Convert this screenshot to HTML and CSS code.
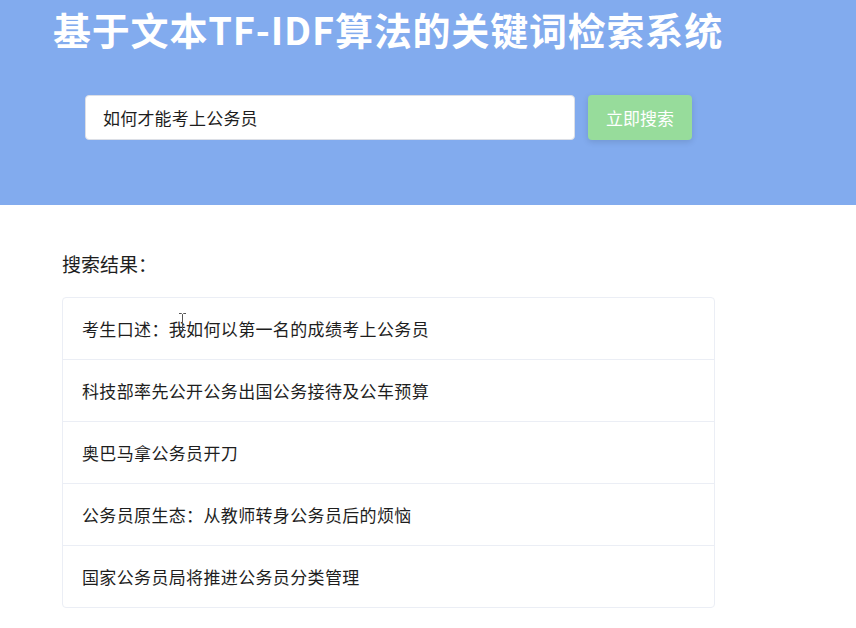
FILE: index.html
```html
<!DOCTYPE html>
<html lang="zh-CN">
<head>
<meta charset="utf-8">
<title>关键词检索系统</title>
<link rel="stylesheet" href="styles.css">
</head>
<body>
<header class="hero">
  <h1 class="title">基于文本TF-IDF算法的关键词检索系统</h1>
  <form class="search">
    <div class="search-input">如何才能考上公务员</div>
    <button type="button" class="search-btn">立即搜索</button>
  </form>
</header>
<main class="results">
  <h2 class="results-title">搜索结果：</h2>
  <ul class="result-list">
    <li class="result-item">考生口述：我如何以第一名的成绩考上公务员
      <svg class="ibeam" width="9" height="20" viewBox="0 0 9 20"><path d="M1 1.5h2.5l1 1 1-1H8M4.5 2.5v15M1 18.5h2.5l1-1 1 1H8" fill="none" stroke="#555" stroke-width="1"/></svg>
    </li>
    <li class="result-item">科技部率先公开公务出国公务接待及公车预算</li>
    <li class="result-item">奥巴马拿公务员开刀</li>
    <li class="result-item">公务员原生态：从教师转身公务员后的烦恼</li>
    <li class="result-item">国家公务员局将推进公务员分类管理</li>
  </ul>
</main>
</body>
</html>
```
FILE: styles.css
```css
* { box-sizing: border-box; }
html, body {
  margin: 0;
  padding: 0;
  background: #fff;
  font-family: "Noto Sans CJK SC", "Noto Sans", sans-serif;
  color: #1e1e1e;
}
.hero {
  background: #82abee;
  height: 205px;
  padding: 3px 0 0 53px;
}
.title {
  margin: 0;
  font-size: 38px;
  line-height: 52px;
  font-weight: 700;
  color: #fff;
  letter-spacing: 0.8px;
}
.search {
  display: flex;
  gap: 13px;
  margin: 40px 0 0 32px;
}
.search-input {
  width: 490px;
  height: 45px;
  background: #fff;
  border: 1px solid #dcdfe6;
  border-radius: 4px;
  padding: 0 17px;
  display: flex;
  align-items: center;
  font-size: 17px;
  letter-spacing: 0.2px;
  color: #1e1e1e;
}
.search-btn {
  width: 104px;
  height: 45px;
  border: none;
  border-radius: 4px;
  background: #97dc9b;
  color: #fff;
  font-family: inherit;
  font-size: 17px;
  box-shadow: 0 2px 6px rgba(0,0,0,0.12);
  padding: 0;
}
.results {
  padding: 44px 0 0 62px;
}
.results-title {
  margin: 0 0 18px 0;
  font-size: 19px;
  font-weight: 400;
  line-height: 30px;
  color: #1e1e1e;
}
.result-list {
  list-style: none;
  margin: 0;
  padding: 0;
  width: 653px;
  border: 1px solid #ebeef5;
  border-radius: 4px;
}
.result-item {
  position: relative;
  height: 62px;
  display: flex;
  align-items: center;
  padding-left: 19px;
  font-size: 17px;
  letter-spacing: 0.35px;
  color: #1e1e1e;
  border-top: 1px solid #ebeef5;
}
.result-item:first-child { border-top: none; height: 61px; }
.ibeam {
  position: absolute;
  left: 115px;
  top: 14px;
}
```
